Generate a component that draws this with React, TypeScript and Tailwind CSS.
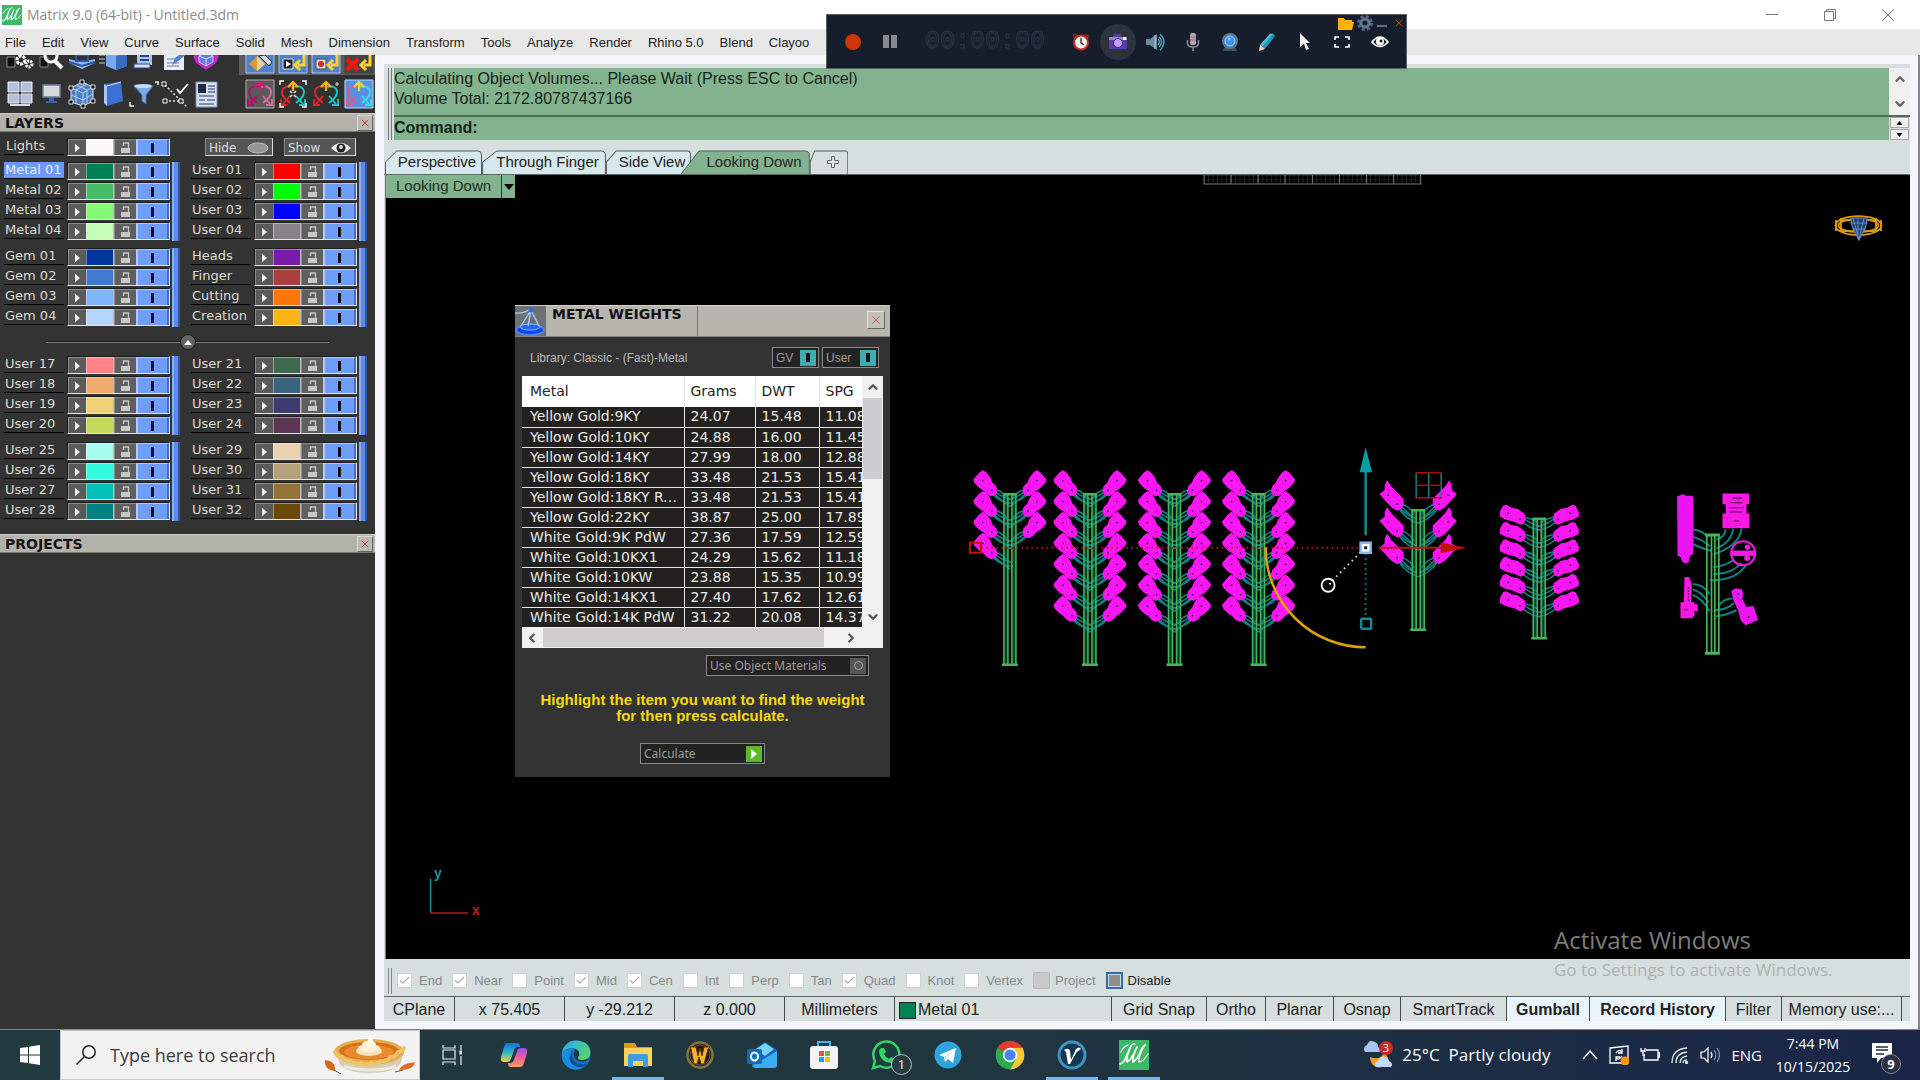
import React, { useState } from 'react';
import { Check, ChevronDown, ChevronLeft, ChevronRight, ChevronUp, X } from 'lucide-react';

type Layer = { name: string; color: string };

const menuItems = [
  'File', 'Edit', 'View', 'Curve', 'Surface', 'Solid', 'Mesh', 'Dimension', 'Transform', 'Tools',
  'Analyze', 'Render', 'Rhino 5.0', 'Blend', 'Clayoo', 'Help',
];

const layerGroups: [Layer[], Layer[]][] = [
  [
    [
      { name: 'Metal 01', color: '#008255' },
      { name: 'Metal 02', color: '#45bd68' },
      { name: 'Metal 03', color: '#84fb76' },
      { name: 'Metal 04', color: '#c4ffb9' },
    ],
    [
      { name: 'User 01', color: '#fe0000' },
      { name: 'User 02', color: '#00fb08' },
      { name: 'User 03', color: '#0000fb' },
      { name: 'User 04', color: '#858385' },
    ],
  ],
  [
    [
      { name: 'Gem 01', color: '#00379c' },
      { name: 'Gem 02', color: '#4079cf' },
      { name: 'Gem 03', color: '#80b4f8' },
      { name: 'Gem 04', color: '#b5d5ff' },
    ],
    [
      { name: 'Heads', color: '#7a1aa8' },
      { name: 'Finger', color: '#ab3f40' },
      { name: 'Cutting', color: '#ff7606' },
      { name: 'Creation', color: '#ffb416' },
    ],
  ],
  [
    [
      { name: 'User 17', color: '#ff8386' },
      { name: 'User 18', color: '#f0ab6c' },
      { name: 'User 19', color: '#f1d077' },
      { name: 'User 20', color: '#c2da5a' },
    ],
    [
      { name: 'User 21', color: '#3f6950' },
      { name: 'User 22', color: '#38637d' },
      { name: 'User 23', color: '#3e3b70' },
      { name: 'User 24', color: '#5d3553' },
    ],
  ],
  [
    [
      { name: 'User 25', color: '#a4fff0' },
      { name: 'User 26', color: '#32fbe0' },
      { name: 'User 27', color: '#00c0b8' },
      { name: 'User 28', color: '#018084' },
    ],
    [
      { name: 'User 29', color: '#ead2b3' },
      { name: 'User 30', color: '#b5a07a' },
      { name: 'User 31', color: '#937338' },
      { name: 'User 32', color: '#6b4a09' },
    ],
  ],
];

const metals = [
  ['Yellow Gold:9KY', '24.07', '15.48', '11.08'],
  ['Yellow Gold:10KY', '24.88', '16.00', '11.45'],
  ['Yellow Gold:14KY', '27.99', '18.00', '12.88'],
  ['Yellow Gold:18KY', '33.48', '21.53', '15.41'],
  ['Yellow Gold:18KY Royal', '33.48', '21.53', '15.41'],
  ['Yellow Gold:22KY', '38.87', '25.00', '17.89'],
  ['White Gold:9K PdW', '27.36', '17.59', '12.59'],
  ['White Gold:10KX1', '24.29', '15.62', '11.18'],
  ['White Gold:10KW', '23.88', '15.35', '10.99'],
  ['White Gold:14KX1', '27.40', '17.62', '12.61'],
  ['White Gold:14K PdW', '31.22', '20.08', '14.37'],
];

const snaps = [
  { label: 'End', on: true },
  { label: 'Near', on: true },
  { label: 'Point', on: false },
  { label: 'Mid', on: true },
  { label: 'Cen', on: true },
  { label: 'Int', on: false },
  { label: 'Perp', on: false },
  { label: 'Tan', on: false },
  { label: 'Quad', on: true },
  { label: 'Knot', on: false },
  { label: 'Vertex', on: false },
];

const MatrixLogo = ({ className }: { className: string }) => (
  <svg viewBox="0 0 30 30" className={className}>
    <rect width="30" height="30" fill="#3fb768" />
    <path
      d="M1 24q4-1 6-7L12 6q-5 10-4 16 6-4 10-15-5 10-4 15 5-3 9-14l3-3"
      fill="none" stroke="#fff" strokeWidth="1.7" strokeLinecap="round" strokeLinejoin="round"
    />
    <path d="M26 5q-7 11-6 17 4 0 9-8M2 12q2-5 7-7M12 6q2-3 4-2" fill="none" stroke="#fff" strokeWidth="1.3" strokeLinecap="round" />
  </svg>
);

/* ---------- left tool palette ---------- */

const Ico = ({ children }: { children: React.ReactNode }) => (
  <svg viewBox="0 0 30 30" className="w-[30px] h-[30px] shrink-0">
    {children}
  </svg>
);

const Gumball = ({ a, b, c }: { a: string; b: string; c: string }) => (
  <g fill="none" strokeWidth="1.8">
    <path d="M14 8C8 6 4 9 4 13c0 5 4 8 8 11M12 17l-7 8M3 20v6h6" stroke={a} />
    <path d="M16 8c6-2 10 1 10 5 0 5-4 8-8 11M18 17l7 8M27 20v6h-6" stroke={c} />
    <path d="M15 12V4M10 8l5-5 5 5" stroke={b} strokeWidth="2.2" />
  </g>
);

const topTools = [
  <Ico key="gears">
    <path d="M2 16h8v10H2z" fill="#111" stroke="#888" />
    <circle cx="16" cy="19" r="4" fill="none" stroke="#fff" strokeWidth="3" strokeDasharray="3 1" />
    <circle cx="24" cy="23" r="3" fill="none" stroke="#fff" strokeWidth="3" strokeDasharray="2 1" />
  </Ico>,
  <Ico key="find">
    <path d="M4 16h8v10H4z" fill="#111" stroke="#888" />
    <circle cx="15" cy="15" r="6" fill="none" stroke="#fff" strokeWidth="3" />
    <path d="M19 20l7 7" stroke="#fff" strokeWidth="4" />
  </Ico>,
  <Ico key="plane">
    <path d="M2 18l13 3 13-3v4l-13 6-13-6z" fill="#8fb4ea" />
    <path d="M2 21l13 4 13-4M9 14h12v6H9z" fill="none" stroke="#2b559f" strokeWidth="2" />
  </Ico>,
  <Ico key="cube">
    <path d="M1 14h6M1 18h6M1 22h6" stroke="#c9c9c9" />
    <path d="M8 12l10-3 11 3v13l-11 4-10-4z" fill="#78a8ee" />
    <path d="M18 15v14l11-4V12z" fill="#396bc0" />
  </Ico>,
  <Ico key="scroll">
    <path d="M8 10h15v14H8z" fill="#a9c3ef" />
    <path d="M11 15h9M11 19h9" stroke="#28488c" strokeWidth="2" />
    <path d="M5 23h16v4H5z" fill="#d7e2f7" stroke="#28488c" />
  </Ico>,
  <Ico key="note">
    <path d="M4 8h20v21H4z" fill="#e8ecf5" />
    <path d="M7 18h10M7 22h12M7 25h12" stroke="#6c7ca5" />
    <path d="M12 24l3-7 12-9 2 3-12 10z" fill="#4b83d5" />
  </Ico>,
  <Ico key="gem">
    <path d="M2 15l13-8 13 8-3 7-10 7-10-7z" fill="#b82ad0" />
    <path d="M8 15l7-4 7 4v6l-7 4-7-4z" fill="#5c7fe0" stroke="#efb1f5" />
    <path d="M15 17v8M8 15l7 3 7-3" fill="none" stroke="#dcd3fa" />
  </Ico>,
];

const arrowTool = (key: string, mark: React.ReactNode) => (
  <Ico key={key}>
    <path d="M1 8h28v20H1z" fill={key === 'cancel' ? '#444' : '#4f80cc'} stroke={key === 'cancel' ? '#444' : '#a9c4ee'} />
    {mark}
    <path d="M26 10v10h-6M22 15l-5 5 5 5" fill="none" stroke="#ffd32d" strokeWidth="3" />
  </Ico>
);

const modeTools = [
  <Ico key="pick">
    <path d="M1 8h28v20H1z" fill="#4f80cc" stroke="#a9c4ee" />
    <path d="M4 19l8-8 8 8-8 7z" fill="#d99a35" />
    <path d="M12 11l8 8-8 7z" fill="#f6d38a" />
    <path d="M14 11l10 10 3-4-7-7z" fill="#d6d6d6" stroke="#333" />
  </Ico>,
  arrowTool('play', (
    <>
      <path d="M5 14h10v10H5z" fill="#222" stroke="#ddd" />
      <path d="M8 16v6l5-3z" fill="#fff" />
    </>
  )),
  arrowTool('record', (
    <>
      <path d="M5 14h10v10H5z" fill="#ddd" stroke="#444" />
      <circle cx="10" cy="19" r="3" fill="#d8261b" />
    </>
  )),
  arrowTool('cancel', <path d="M3 14l11 11M14 14L3 25" stroke="#f3160a" strokeWidth="4" />),
];

const lowerTools = [
  <Ico key="views">
    <path d="M3 3h11v10H3zM16 3h11v10H16zM3 15h11v9l-11 0zM16 15h11v9H16z" fill="#b5c0da" stroke="#edf1fb" />
    <path d="M5 26h20" stroke="#d5dbea" strokeWidth="2" />
  </Ico>,
  <Ico key="monitor">
    <path d="M7 6h17v12H7z" fill="#d9d9dc" stroke="#6f7f9f" strokeWidth="1.5" />
    <path d="M13 19h5v3h-5zM10 22h11v2H10z" fill="#3d62ab" />
  </Ico>,
  <Ico key="mesh">
    <path d="M4 9l11-6 11 5v14l-10 5-12-4z" fill="#4f7fc4" stroke="#dde6f5" />
    <path d="M4 9l12 5 10-6M16 14v13M9 6l11 5v14M20 5L9 11v14M4 16l12 5 10-6" fill="none" stroke="#b2cef5" />
    <path d="M2 7h4v4H2zM13 1h4v4h-4zM24 6h4v4h-4zM14 25h4v4h-4zM2 21h4v4H2zM24 20h4v4h-4z" fill="#111" stroke="#ddd" />
  </Ico>,
  <Ico key="book">
    <path d="M6 5l17-2 2 19-16 5-3-3z" fill="#3d6fd4" />
    <path d="M6 5l3 2v20l-3-3z" fill="#a9c5f8" />
    <path d="M9 7l14-4" stroke="#d6e3fb" />
  </Ico>,
  <Ico key="filter">
    <path d="M5 7h19l-7 9v9l-4-3v-6z" fill="#79aae8" stroke="#4275ba" />
    <ellipse cx="14" cy="7" rx="9" ry="2" fill="#c3dbf8" />
    <path d="M26 3h3v3M1 23v4h4" fill="none" stroke="#eee" strokeWidth="1.5" />
  </Ico>,
  <Ico key="points">
    <path d="M5 6l10 10 12 12M5 22h20" stroke="#eee" strokeDasharray="2 2" strokeWidth="1.5" />
    <path d="M2 3h4v4H2zM3 20h4v4H3zM19 20h4v4h-4z" fill="#222" stroke="#fff" />
    <path d="M17 10l3 4 8-9" fill="none" stroke="#fff" strokeWidth="1.8" />
  </Ico>,
  <Ico key="sheet">
    <path d="M5 3h21v25H5z" fill="#d7def0" stroke="#8090b3" />
    <path d="M7 5h8v9H7z" fill="#1e2941" />
    <path d="M17 7h7M17 10h7M17 13h7M8 17h15M8 21h6M16 21h8M8 25h15" stroke="#637298" strokeWidth="1.5" />
  </Ico>,
];

const gumballTools = [
  <Ico key="g1">
    <path d="M1 1h28v28H1z" fill="#5a5a5a" stroke="#aaa" />
    <Gumball a="#b30f63" b="#d01d78" c="#e26ba6" />
  </Ico>,
  <Ico key="g2">
    <Gumball a="#e3262b" b="#ffb515" c="#20c5c4" />
    <path d="M2 6V2h4M24 2h4v4M28 24v4h-4M6 28H2v-4M12 12l2 2M18 12l-2 2M12 18l2-2M18 18l-2-2" fill="none" stroke="#fff" strokeWidth="1.4" />
  </Ico>,
  <Ico key="g3">
    <Gumball a="#e3262b" b="#ffb515" c="#20c5c4" />
    <path d="M26 3v4M24 5h4" stroke="#ddd" />
  </Ico>,
  <Ico key="g4">
    <path d="M1 1h28v28H1z" fill="#5791e6" stroke="#c5d8f5" />
    <Gumball a="#e05a7e" b="#ffd23c" c="#3edbe9" />
  </Ico>,
];

const ToolPalette = () => (
  <div className="bg-[#323132]">
    <div className="flex h-5 overflow-hidden">
      <div className="flex items-end w-[240px] pl-1 pb-1">
        {topTools.map((icon, i) => (
          <button key={i} className="w-[31px] flex justify-center shrink-0">{icon}</button>
        ))}
      </div>
      <div className="flex flex-1 items-end bg-[#5b5b5c] pl-1">
        {modeTools.map((icon, i) => (
          <button key={i} className="w-[33px] flex justify-center shrink-0">{icon}</button>
        ))}
      </div>
    </div>
    <div className="flex py-1">
      <div className="flex w-[240px] pl-1">
        {lowerTools.map((icon, i) => (
          <button key={i} className="w-[31px] flex justify-center shrink-0">{icon}</button>
        ))}
      </div>
      <div className="flex pl-1">
        {gumballTools.map((icon, i) => (
          <button key={i} className="w-[33px] flex justify-center shrink-0">{icon}</button>
        ))}
      </div>
    </div>
  </div>
);

/* ---------- layers ---------- */

const PanelHeader = ({ title }: { title: string }) => (
  <div className="flex items-center justify-between h-[19px] pl-[5px] pr-[2px] bg-[#b3b2aa] border-t border-[#d0cfc8] border-b border-b-[#77766f]">
    <h2 className="font-bold text-[14px] leading-4 text-[#111]">{title}</h2>
    <button aria-label="Close" className="w-4 h-4 flex items-center justify-center bg-[#bcbbb3] border border-[#dbdad4] border-r-[#66655f] border-b-[#66655f]">
      <X className="w-3 h-3 text-[#c23b3b]" />
    </button>
  </div>
);

const LayerControls = ({ color }: { color: string }) => (
  <div className="flex w-[103px] h-[18px] border border-[#1c1c1c] border-b-[#e6e6e6] border-r-[#e6e6e6] bg-[#232323]">
    <button aria-label="Expand" className="w-[18px] flex items-center justify-center bg-[#5a5a5b] border-l border-t border-[#8d8d8d]">
      <svg viewBox="0 0 6 10" className="w-[5px] h-[10px]"><path d="M0 0l6 5-6 5z" fill="#f2f2f2" /></svg>
    </button>
    <button aria-label="Color" className="w-[28px] border-l border-t border-white/40 border-r border-r-[#bbb]" style={{ background: color }} />
    <button aria-label="Lock" className="w-[22px] flex items-center justify-center bg-[#5f5f60] border-l border-t border-[#8d8d8d]">
      <svg viewBox="0 0 10 12" className="w-[10px] h-3">
        <path d="M0 6h9v5H0z" fill="#c8c8c8" />
        <path d="M2.500 4V1h5v5" fill="none" stroke="#c8c8c8" strokeWidth="1.300" />
      </svg>
    </button>
    <button aria-label="Visible" className="flex-1 flex items-center justify-center bg-[#6f9dfa] border-l-2 border-t border-[#b2c9ff] border-r-2 border-r-[#4670c4]">
      <span className="w-[3px] h-[10px] bg-[#0b0f1c]" />
    </button>
  </div>
);

const LayerColumn = ({ layers, active, onPick }: { layers: Layer[]; active: string; onPick: (n: string) => void }) => (
  <div className="flex gap-[2px]">
    <div>
      {layers.map((layer) => (
        <div key={layer.name} className="flex gap-[3px] h-5">
          <button
            onClick={() => onPick(layer.name)}
            className={`w-[60px] h-[17px] pl-[1px] text-left text-[13px] leading-4 whitespace-nowrap border-b border-black ${
              active === layer.name ? 'bg-[#6d98f7] text-[#e6edff]' : 'text-[#dcdcd0]'
            }`}
          >
            {layer.name}
          </button>
          <LayerControls color={layer.color} />
        </div>
      ))}
    </div>
    <div className="w-2 h-[79px] bg-[#5c8bea] border-l-2 border-[#8bb0ff] border-r-2 border-r-[#2f57a5]" />
  </div>
);

const LayerBlock = ({ group, active, onPick }: { group: [Layer[], Layer[]]; active: string; onPick: (n: string) => void }) => (
  <div className="flex gap-[11px]">
    <LayerColumn layers={group[0]} active={active} onPick={onPick} />
    <LayerColumn layers={group[1]} active={active} onPick={onPick} />
  </div>
);

const pillButton = 'flex items-center justify-between h-[18px] pt-[1px] px-[3px] text-[12px] text-[#ddd] bg-[#555556] border border-[#888] border-r-[#ddd] border-b-[#ddd]';

const SidePanel = () => {
  const [active, setActive] = useState('Metal 01');

  return (
    <aside className="w-[375px] shrink-0 flex flex-col bg-[#343334] font-['DejaVu_Sans',sans-serif] overflow-hidden">
      <ToolPalette />
      <PanelHeader title="LAYERS" />
      <div className="pl-1 pt-[6px] pb-3 flex flex-col gap-[6px]">
        <div className="flex gap-[3px]">
          <span className="w-[60px] h-[17px] pl-[2px] text-[13px] leading-4 text-[#dcdcd0] border-b border-black">Lights</span>
          <LayerControls color="#fbfaf8" />
          <button className={`${pillButton} w-[68px] ml-8`}>
            Hide
            <svg viewBox="0 0 22 12" className="w-[22px] h-3"><ellipse cx="11" cy="6" rx="10" ry="5" fill="#969696" stroke="#bcbcbc" /></svg>
          </button>
          <button className={`${pillButton} w-[72px] ml-2`}>
            Show
            <svg viewBox="0 0 22 12" className="w-[22px] h-3">
              <path d="M1 6q10-10 20 0-10 10-20 0z" fill="#eee" />
              <circle cx="11" cy="6" r="4.500" fill="#222" />
              <circle cx="11" cy="5" r="2" fill="#ddd" />
            </svg>
          </button>
        </div>
        <LayerBlock group={layerGroups[0]} active={active} onPick={setActive} />
        <LayerBlock group={layerGroups[1]} active={active} onPick={setActive} />
        <div className="flex items-center h-4 pl-[42px] pr-[46px]">
          <span className="flex-1 h-[2px] bg-[#1c1c1c] border-b border-[#777]" />
          <button aria-label="Collapse" className="w-4 h-4 rounded-full bg-[#626262] border border-[#161616] flex items-center justify-center">
            <svg viewBox="0 0 8 5" className="w-2 h-[5px]"><path d="M0 5l4-5 4 5z" fill="#fff" /></svg>
          </button>
          <span className="flex-1 h-[2px] bg-[#1c1c1c] border-b border-[#777]" />
        </div>
        <LayerBlock group={layerGroups[2]} active={active} onPick={setActive} />
        <LayerBlock group={layerGroups[3]} active={active} onPick={setActive} />
      </div>
      <PanelHeader title="PROJECTS" />
    </aside>
  );
};

/* ---------- command area ---------- */

const CommandArea = () => (
  <div className="flex pt-1 pl-1 gap-[2px]">
    <div className="w-[4px] border-l border-r border-[#777]" />
    <div className="flex-1 text-[16px] text-[#16231a]">
      <div className="flex border-b-2 border-[#4e6b55]">
        <div className="flex-1 bg-[#83b38e] pt-[1px] leading-5 h-[47px]">
          <p>Calculating Object Volumes... Please Wait (Press ESC to Cancel)</p>
          <p>Volume Total: 2172.80787437166</p>
        </div>
        <div className="w-[21px] bg-[#f0f0f0] flex flex-col items-center justify-between py-1 text-[#606060]">
          <ChevronUp className="w-[14px] h-[14px]" strokeWidth={4} />
          <ChevronDown className="w-[14px] h-[14px]" strokeWidth={4} />
        </div>
      </div>
      <div className="flex h-[23px]">
        <label htmlFor="command" className="bg-[#83b38e] font-bold leading-[22px]">Command:</label>
        <input id="command" className="flex-1 min-w-0 bg-[#83b38e] px-1 outline-none" />
        <div className="w-[21px] flex flex-col gap-[1px] px-[1px]">
          {['M0 4l3-4 3 4z', 'M0 0l3 4 3-4z'].map((d) => (
            <button key={d} aria-label="History" className="flex-1 flex items-center justify-center bg-[#efefef] border border-[#aaa]">
              <svg viewBox="0 0 6 4" className="w-[7px] h-1"><path d={d} /></svg>
            </button>
          ))}
        </div>
      </div>
    </div>
  </div>
);

const ViewTabs = () => (
  <div className="flex items-end h-[35px] pl-[1px] text-[15px] text-[#222] border-b border-[#5d6664]">
    {[
      { name: 'Perspective', w: 'w-[97px]' },
      { name: 'Through Finger', w: 'w-[124px]' },
      { name: 'Side View', w: 'w-[85px]' },
      { name: 'Looking Down', w: 'w-[119px]' },
      { name: '+', w: 'w-[38px]' },
    ].map((tab) => {
      const on = tab.name === 'Looking Down';
      const plus = tab.name === '+';
      return (
        <button key={tab.name} aria-label={tab.name} className={`${tab.w} relative h-6 pl-[7px] text-center whitespace-nowrap ${on ? 'z-10' : ''}`}>
          <svg viewBox="0 0 100 24" preserveAspectRatio="none" className={`absolute top-0 bottom-0 right-0 h-full ${on ? 'left-[-10px] w-[129px]' : 'left-0 w-full'}`}>
            <path
              d={on ? 'M0 24L14 1H96Q99.500 1 99.500 5V24' : 'M.5 24V12L12 1H96Q99.500 1 99.500 5V24'}
              fill={on ? '#83b38e' : plus ? '#d6dfde' : '#d6e8eb'}
              stroke="#555d5c"
              vectorEffect="non-scaling-stroke"
            />
          </svg>
          {plus ? (
            <svg viewBox="0 0 12 12" className="relative w-3 h-3 mx-auto">
              <path d="M4.500.5h3v4h4v3h-4v4h-3v-4h-4v-3h4z" fill="#e9eeed" stroke="#666" />
            </svg>
          ) : (
            <span className="relative block leading-[22px]">{tab.name}</span>
          )}
        </button>
      );
    })}
  </div>
);

/* ---------- viewport drawing ---------- */

type TreeProps = {
  cx: number; top: number; bottom: number; start: number; pitch: number; left: number; right: number;
  leaf: string; twigs: string; dots: [number, number][];
};

const Tree = ({ cx, top, bottom, start, pitch, left, right, leaf, twigs, dots }: TreeProps) => {
  const side = (count: number, flip: number) =>
    Array.from({ length: count }, (_, i) => (
      <g key={`${flip}-${i}`} transform={`translate(${cx} ${start + i * pitch}) scale(${flip} 1)`}>
        <path d={twigs} fill="none" stroke="#0d8080" strokeWidth="1.6" />
        <path d={leaf} fill="#fb17f4" stroke="#fb17f4" strokeLinejoin="round" />
        {dots.map(([x, y]) => <circle key={x} cx={x} cy={y} r="0.9" fill="#3b0c4c" />)}
      </g>
    ));
  return (
    <g>
      <path d={`M${cx - 4} ${top}V${bottom}M${cx + 4} ${top}V${bottom}`} stroke="#0c4526" strokeWidth="3" />
      {side(left, 1)}
      {side(right, -1)}
      <path
        d={`M${cx - 6} ${top}V${bottom}M${cx - 2} ${top}V${bottom}M${cx + 2} ${top}V${bottom}M${cx + 6} ${top}V${bottom}`}
        stroke="#46b45c" strokeWidth="1.6"
      />
      <path d={`M${cx - 7} ${top}H${cx + 7}M${cx - 8} ${bottom}H${cx + 8}`} stroke="#46b45c" strokeWidth="2.400" />
    </g>
  );
};

const wide = {
  top: 494, bottom: 664.5, start: 470.5, pitch: 20.9,
  leaf: 'M-36 9L-35 12L-30 17L-26 19.500L-23 23L-19 25L-15 24L-13 21L-14 16L-18 12L-20 7L-24 2L-27 0L-30 2Z',
  twigs: 'M-14 19Q-9 20-3 26M-15 21Q-9 26 2 29M-17 24Q-9 32 3 33M-16 23Q-9 29 0 36',
  dots: [[-27, 10], [-18, 19.5]] as [number, number][],
};
const spiky = {
  top: 510, bottom: 629.5, start: 481, pitch: 26.7,
  leaf: 'M-38 13L-33 9L-33 4L-31 0L-27 6L-21 12L-15 18L-15 23L-17 27L-21 29L-26 26L-30 22Z',
  twigs: 'M-16 23Q-9 25-4 33M-17 25Q-9 33-4 37M-19 28Q-12 38 0 42M-18 27Q-11 35-1 38',
  dots: [[-30, 14], [-21, 23]] as [number, number][],
};
const flat = {
  top: 518.5, bottom: 638, start: 505, pitch: 17.3,
  leaf: 'M-39 11L-39 7L-36 1L-33 0L-28 3L-22 4L-15 9L-14 14L-16 18L-19 19L-25 16L-33 14Z',
  twigs: 'M-14 12Q-8 13-2 17M-14 14Q-9 19 2 21M-16 17Q-9 24 2 25',
  dots: [[-31, 8], [-19, 14]] as [number, number][],
};

const Scene = () => (
  <svg viewBox="387 175 1523 784" preserveAspectRatio="xMinYMin slice" className="absolute inset-0 w-full h-full">
    <defs>
      <pattern id="mesh" x="1204" y="175" width="4.500" height="4.500" patternUnits="userSpaceOnUse">
        <path d="M0 0H4.500M0 0V4.500" stroke="#3c3c3c" />
      </pattern>
    </defs>
    <path d="M1204 175H1421V183H1204Z" fill="url(#mesh)" />
    <path d="M1204.500 175V184M1231.500 175V184M1258.500 175V184M1285.500 175V184M1313 175V184M1340 175V184M1367 175V184M1394 175V184M1421 175V184M1204 184H1422" stroke="#777" />

    <g fill="none" stroke="#dc9b17" strokeWidth="1.8">
      <ellipse cx="1858.500" cy="225.500" rx="23" ry="9.500" />
      <ellipse cx="1858.500" cy="225.500" rx="20" ry="6.500" />
      <path d="M1836 220v11M1841 218v14M1876 218v14M1881 220v11M1841 220h35M1841 231h35" />
    </g>
    <path d="M1851 218h16l-1 8-7 14-7-14z" fill="#263d68" stroke="#6288cf" />
    <path d="M1850 223h18M1853 218l6 21 5-21M1858 217v22M1852 229h14" stroke="#6288cf" fill="none" />

    <Tree cx={1010.5} left={4} right={3} {...wide} />
    <Tree cx={1090.5} left={7} right={7} {...wide} />
    <Tree cx={1175} left={7} right={7} {...wide} />
    <Tree cx={1259} left={7} right={7} {...wide} />
    <Tree cx={1418.5} left={3} right={3} {...spiky} />
    <Tree cx={1539.5} left={6} right={6} {...flat} />

    {/* sprue with mixed parts */}
    <g transform="translate(1360 440) scale(0.3333)">
      <g fill="none" stroke="#0d8080" strokeWidth="6">
        <path d="M1000 268q25 2 45 22M1000 290q30 10 50 28M1000 312q25 12 55 20M1098 268q-5 25-28 30M1120 265q-5 40-50 60M1145 265q-5 50-85 78M1120 360q-30 20-60 20M1145 368q-30 35-85 33M1160 372q-30 50-110 48M998 432q30-2 52 30M998 448q25 5 48 38M998 464q30 10 50 48M1118 475q-30 0-42 25M1122 488q-20 20-56 22M1130 510q-30 15-62 18" />
      </g>
      <path d="M1041 285V638M1055 285V638M1065 285V638M1077 285V638" stroke="#46b45c" strokeWidth="5" />
      <path d="M1036 284H1080M1035 639H1080" stroke="#46b45c" strokeWidth="9" />
      <path d="M952 167h8l4-4h10l4 4h20l3 8v140l-2 28-8 3-4 20-10 4-10-6-4-12-10-6z" fill="#ec14f2" />
      <path d="M1088 160h80v32h-8v28h8v44h-80v-44h10v-28h-10z" fill="#fb17e4" />
      <path d="M1118 174h28M1112 187h36M1108 202h44M1108 215h40M1122 243h16" stroke="#5f1168" strokeWidth="4" />
      <circle cx="1150" cy="339" r="36" fill="none" stroke="#fb17e4" strokeWidth="6" />
      <path d="M1114 339h72" stroke="#fb17e4" strokeWidth="16" />
      <circle cx="1163" cy="321" r="8" fill="#fb17e4" />
      <circle cx="1162" cy="353" r="9" fill="#fb17e4" />
      <path d="M974 410h14l8 22-2 54h10v6h10v20h-10v14l-8 8h-34v-48h10z" fill="#fb17e4" />
      <path d="M986 440v46M972 508h14" stroke="#5f1168" strokeWidth="4" strokeDasharray="6 3" />
      <path d="M1114 452l14-8 18 4 4 12-3 14 12 26 22-3 14 42-38 16-14-14-8-30-14-30z" fill="#f016f2" />
      <circle cx="1166" cy="531" r="3" fill="#3b0c4c" />
      <circle cx="1135" cy="461" r="3" fill="#3b0c4c" />
    </g>

    {/* gumball */}
    <path d="M982 547.500H1360" stroke="#c01818" strokeWidth="2" strokeDasharray="1.500 3.500" />
    <rect x="970.500" y="542.500" width="11" height="10" fill="none" stroke="#c01010" strokeWidth="2" />
    <path d="M1266 547A100 100 0 0 0 1366 647" fill="none" stroke="#e0a012" strokeWidth="2.500" />
    <path d="M1366 535V465" stroke="#0f8b91" strokeWidth="2.500" />
    <path d="M1360 472L1366 447L1372.500 472Z" fill="#05a0a6" />
    <path d="M1366 553V618" stroke="#0f8b91" strokeWidth="2" strokeDasharray="1.500 3.500" />
    <rect x="1361.500" y="618.500" width="10" height="10" rx="1" fill="none" stroke="#0f8b91" strokeWidth="2.400" />
    <path d="M1361 552L1333 580" stroke="#ddd" strokeWidth="2" strokeDasharray="1.500 4" />
    <circle cx="1328.500" cy="585" r="6.500" fill="none" stroke="#fff" strokeWidth="1.800" />
    <circle cx="1330.500" cy="583.500" r="1" fill="#fff" />
    <rect x="1361" y="542.500" width="10" height="10" fill="#fff" stroke="#8db8ee" strokeWidth="2.500" />
    <rect x="1364.500" y="546" width="3" height="3" fill="#222" />
    <path d="M1379 547.500H1442" stroke="#c11616" strokeWidth="2.200" />
    <path d="M1441 542L1467 547.500L1441 553Z" fill="#c30f0c" />
    <path d="M1416.500 473V498M1429 473V498M1441.500 473V498" stroke="#187f83" strokeWidth="1.500" />
    <path d="M1416 472.500H1442M1416 485H1442M1416 497.500H1442" stroke="#a8100e" strokeWidth="1.500" />

    {/* world axes */}
    <path d="M431.500 912V878" stroke="#0f8b91" strokeWidth="1.500" />
    <path d="M431 912.500H469" stroke="#b01818" strokeWidth="1.500" />
    <text x="435" y="878" fill="#0f9aa0" fontSize="14" fontWeight="bold">y</text>
    <text x="473" y="915" fill="#d11818" fontSize="14" fontWeight="bold">x</text>
  </svg>
);

/* ---------- metal weights dialog ---------- */

const toggleBox = 'flex items-center justify-between h-[21px] p-[2px] pl-[3px] border border-[#888] bg-[#232222] text-[12px] text-[#9c9c9c]';

const MetalWeights = () => (
  <section className="absolute left-[129px] top-[130px] w-[375px] pb-[13px] bg-[#343334] font-['DejaVu_Sans',sans-serif]">
    <header className="flex h-8 bg-[#b7b6ae] border-t border-[#d0cfc8] border-b border-b-[#85847d]">
      <svg viewBox="0 0 31 30" className="w-[31px] h-[30px] bg-[#6f7072]">
        <ellipse cx="15" cy="24" rx="14" ry="5" fill="#1248e8" stroke="#4f8dff" strokeWidth="1.500" />
        <ellipse cx="15" cy="21" rx="10" ry="3" fill="#2466ff" stroke="#87b6ff" />
        <path d="M0 7q8 1 16-4M16 4L6 20M16 4l8 16M16 4l-3 16" fill="none" stroke="#a5c9ff" strokeWidth="1.400" />
        <circle cx="16" cy="4" r="2.500" fill="#2e6df0" />
      </svg>
      <h2 className="w-[152px] pl-[6px] font-bold text-[14px] leading-4 text-[#111] border-r border-[#77766f]">METAL WEIGHTS</h2>
      <button aria-label="Close dialog" className="ml-auto mr-[5px] mt-[5px] w-[18px] h-[18px] flex items-center justify-center bg-[#c3c2ba] border border-[#e2e1da] border-r-[#66655f] border-b-[#66655f]">
        <X className="w-[14px] h-[14px] text-[#c84a4a]" strokeWidth={1.5} />
      </button>
    </header>
    <div className="flex items-center gap-[3px] pt-[10px] pl-[15px] pr-[11px] pb-2 font-['Liberation_Sans',sans-serif]">
      <p className="flex-1 text-[12px] text-[#b9b9b9]">Library: Classic - (Fast)-Metal</p>
      {[['GV', 'w-[47px]'], ['User', 'w-[57px]']].map(([label, w]) => (
        <button key={label} className={`${toggleBox} ${w}`}>
          {label}
          <span className="w-4 h-4 flex items-center justify-center bg-[#40acaf]">
            <span className="w-1 h-[9px] bg-[#101010]" />
          </span>
        </button>
      ))}
    </div>
    <div className="mx-[7px] bg-[#f0f0f0]">
      <div className="flex">
        <div className="flex-1 overflow-hidden h-[251px]">
          <table className="table-fixed w-[363px] border-collapse text-[14px] text-left">
            <thead className="bg-white text-[#222]">
              <tr className="h-[31px]">
                <th className="w-[162px] pl-2 font-normal border-r border-[#e5e5e5]">Metal</th>
                <th className="w-[71px] pl-[6px] font-normal border-r border-[#e5e5e5]">Grams</th>
                <th className="w-[64px] pl-[6px] font-normal border-r border-[#e5e5e5]">DWT</th>
                <th className="pl-[6px] font-normal">SPG</th>
              </tr>
            </thead>
            <tbody className="bg-[#22211f] text-[#e8e8e4]">
              {metals.map((row) => (
                <tr key={row[0]} className="h-5 border-b border-[#e6e6e6]">
                  {row.map((cell, i) => (
                    <td key={i} className={`p-0 leading-[19px] truncate border-r border-[#e6e6e6] ${i === 0 ? 'pl-2 pr-1' : 'pl-[6px]'}`}>{cell}</td>
                  ))}
                </tr>
              ))}
            </tbody>
          </table>
        </div>
        <div className="w-[21px] flex flex-col items-center text-[#555]">
          <ChevronUp className="w-[14px] h-[14px] my-1" strokeWidth={4} />
          <div className="w-[19px] h-[81px] bg-[#cdcdcf]" />
          <ChevronDown className="w-[14px] h-[14px] mt-auto mb-[3px]" strokeWidth={4} />
        </div>
      </div>
      <div className="flex items-center h-[21px] pl-[3px] text-[#555]">
        <ChevronLeft className="w-[14px] h-[14px] mr-1" strokeWidth={4} />
        <div className="flex-1 h-[19px] bg-[#cfcecd]" />
        <ChevronRight className="w-[14px] h-[14px] ml-5 mr-[25px]" strokeWidth={4} />
      </div>
    </div>
    <div className="flex flex-col items-center pt-[7px] font-['Noto_Sans',sans-serif]">
      <button className={`${toggleBox} w-[163px] self-end mr-[21px]`}>
        Use Object Materials
        <span className="w-4 h-4 flex items-center justify-center bg-[#565656]">
          <span className="w-[9px] h-[9px] rounded-full border border-[#aaa]" />
        </span>
      </button>
      <p className="mt-4 px-4 text-center text-[15px] leading-4 font-bold text-[#f5d90f] font-['Liberation_Sans',sans-serif]">
        Highlight the item you want to find the weight<br />for then press calculate.
      </p>
      <button className={`${toggleBox} w-[125px] mt-[19px]`}>
        Calculate
        <span className="w-4 h-4 flex items-center justify-center bg-[#5cb92b]">
          <svg viewBox="0 0 6 10" className="w-[6px] h-[10px]"><path d="M0 0l6 5-6 5z" fill="#fff" /></svg>
        </span>
      </button>
    </div>
  </section>
);

/* ---------- snap + status bars ---------- */

const SnapBar = () => (
  <div className="flex items-center gap-[10px] h-[38px] pl-1 pt-[6px] text-[13px] text-[#85898a] border-b border-[#5d6664]">
    <div className="w-[4px] h-[26px] mr-[-5px] border-l border-r border-[#888]" />
    {snaps.map((snap) => (
      <label key={snap.label} className="flex items-center gap-[7px]">
        <span className="relative w-[15px] h-[15px] flex">
          <input type="checkbox" defaultChecked={snap.on} className="peer appearance-none w-[15px] h-[15px] bg-white border border-[#d0d0d0]" />
          <Check className="absolute inset-0 w-[15px] h-[15px] p-[1px] text-[#aaa] hidden peer-checked:block pointer-events-none" />
        </span>
        {snap.label}
      </label>
    ))}
    <label className="flex items-center gap-[5px]">
      <input type="checkbox" className="appearance-none w-[17px] h-[17px] rounded-[2px] bg-[#c9c9c9] border border-[#bbb]" />
      Project
    </label>
    <label className="flex items-center gap-[5px] text-[#222]">
      <input type="checkbox" className="appearance-none w-[17px] h-[17px] bg-[#8d8d8d] border-2 border-[#2f6da5] outline outline-1 -outline-offset-3 outline-[#c6dced]" />
      Disable
    </label>
  </div>
);

const cell = 'shrink-0 pt-[2px] border-r border-[#444b4a] flex items-center justify-center whitespace-nowrap';

const StatusBar = () => (
  <div className="flex h-6 text-[16px] text-[#222]">
    <button className={`${cell} w-[71px]`}>CPlane</button>
    <span className={`${cell} w-[110px]`}>x 75.405</span>
    <span className={`${cell} w-[110px]`}>y -29.212</span>
    <span className={`${cell} w-[110px]`}>z 0.000</span>
    <button className={`${cell} w-[110px]`}>Millimeters</button>
    <button className="flex-1 min-w-0 flex items-center gap-[2px] pl-1 pt-[2px] border-r border-[#444b4a]">
      <span className="w-[17px] h-[17px] bg-[#008255] border border-[#222]" />
      Metal 01
    </button>
    <button className={`${cell} w-[95px]`}>Grid Snap</button>
    <button className={`${cell} w-[59px]`}>Ortho</button>
    <button className={`${cell} w-[68px]`}>Planar</button>
    <button className={`${cell} w-[67px]`}>Osnap</button>
    <button className={`${cell} w-[106px]`}>SmartTrack</button>
    <button className={`${cell} w-[83px] font-bold bg-[#e9f4fa]`}>Gumball</button>
    <button className={`${cell} w-[136px] font-bold bg-[#e9f4fa]`}>Record History</button>
    <button className={`${cell} w-[56px]`}>Filter</button>
    <button className={`${cell} w-[120px]`}>Memory use:...</button>
    <span className="w-2" />
  </div>
);

/* ---------- screen recorder ---------- */

const Recorder = () => (
  <div className="absolute left-[826px] top-[14px] w-[581px] h-[55px] flex items-center bg-[#161d2b] border border-[#5a5f66] z-20">
    <button aria-label="Record" className="ml-[18px] w-4 h-4 rounded-full bg-[#cf3404]" />
    <button aria-label="Pause" className="ml-[22px] w-[14px] h-[13px] border-x-[6px] border-[#858890]" />
    <span className="ml-[28px] w-[120px] text-[25px] font-['Liberation_Mono',monospace] text-[#161d2b] [-webkit-text-stroke:1px_#2d3442]">00:00:00</span>
    <div className="flex ml-[17px]">
      <button aria-label="Timer" className="w-[37px] flex justify-center items-center">
        <svg viewBox="0 0 18 18" className="w-[18px] h-[18px]">
          <circle cx="3" cy="3" r="2.500" fill="#5b2230" /><circle cx="15" cy="3" r="2.500" fill="#5b2230" />
          <circle cx="9" cy="9.500" r="7" fill="#f6f3f1" stroke="#d4281f" strokeWidth="2" />
          <path d="M9 5v5l3 2" fill="none" stroke="#222" strokeWidth="1.300" />
        </svg>
      </button>
      <button aria-label="Snapshot" className="w-9 h-9 mx-[1px] rounded-full bg-[#2c323e] flex justify-center items-center">
        <svg viewBox="0 0 18 16" className="w-[18px] h-4">
          <path d="M5 0h7l1 3h5v12H0V3h4z" fill="#5b39b0" /><path d="M0 3h18v3H0z" fill="#8f92a3" />
          <circle cx="9" cy="9" r="4.500" fill="#c39bff" stroke="#40257f" /><path d="M14 3h3v3h-3z" fill="#fff" />
        </svg>
      </button>
      <button aria-label="Speaker" className="w-[37px] flex justify-center items-center">
        <svg viewBox="0 0 19 18" className="w-[19px] h-[18px]">
          <path d="M0 6h4l7-5v16l-7-5H0z" fill="#688c9c" /><path d="M9 2v14" stroke="#b8d3dc" />
          <path d="M12 6q3 3 0 6M13 4q5 5 0 10M14 1q8 8 0 16" fill="none" stroke="#3fa9c5" strokeWidth="1.400" />
        </svg>
      </button>
      <button aria-label="Microphone" className="w-[37px] flex justify-center items-center">
        <svg viewBox="0 0 14 18" className="w-[14px] h-[18px]">
          <rect x="4" width="6" height="12" rx="2" fill="#a7a9b3" /><path d="M4 4h6M4 7h6" stroke="#c0526d" />
          <path d="M1.500 7v3q0 4 5.500 4t5.500-4V7M7 14v4" fill="none" stroke="#8a8c96" strokeWidth="1.500" />
        </svg>
      </button>
      <button aria-label="Webcam" className="w-[37px] flex justify-center items-center">
        <svg viewBox="0 0 18 18" className="w-[18px] h-[18px]">
          <path d="M4 14h10l2 4H2z" fill="#3c5061" /><circle cx="9" cy="8" r="8" fill="#557a94" />
          <circle cx="9" cy="8" r="5" fill="#3d95ef" stroke="#9bd0ff" /><circle cx="8" cy="6" r="1.500" fill="#8ec8ff" />
        </svg>
      </button>
      <button aria-label="Draw" className="w-[38px] flex justify-center items-center">
        <svg viewBox="0 0 18 18" className="w-[18px] h-[18px]">
          <path d="M12 1q3-2 5 2L7 16 2 12z" fill="#2393b8" /><path d="M12 1L2 12l2 2L15 1z" fill="#4dbbd8" />
          <path d="M2 12l5 4-6 2z" fill="#ffd8c5" />
        </svg>
      </button>
      <button aria-label="Cursor" className="w-[37px] flex justify-center items-center">
        <svg viewBox="0 0 12 17" className="w-3 h-[17px]"><path d="M1 0l10 10H7l3 6-3 1-2-6-4 3z" fill="#f0f0f0" /></svg>
      </button>
      <button aria-label="Region" className="w-[38px] flex justify-center items-center">
        <svg viewBox="0 0 16 12" className="w-4 h-3"><path d="M1 4V1h4M11 1h4v3M15 8v3h-4M5 11H1V8" fill="none" stroke="#fff" strokeWidth="1.600" /></svg>
      </button>
      <button aria-label="Preview" className="w-[37px] flex justify-center items-center">
        <svg viewBox="0 0 18 12" className="w-[18px] h-3">
          <path d="M1 6q8-10 16 0-8 9-16 0z" fill="#161d2b" stroke="#fff" strokeWidth="1.700" />
          <circle cx="9" cy="5.500" r="4" fill="#fff" /><circle cx="10" cy="5" r="1.500" fill="#161d2b" />
        </svg>
      </button>
    </div>
    <div className="absolute right-[1px] top-0 flex items-center gap-[3px]">
      <svg viewBox="0 0 16 13" className="w-4 h-[13px]"><path d="M0 1h6l1 2h7v2h2l-2 8H0z" fill="#ffb10a" /></svg>
      <svg viewBox="0 0 16 16" className="w-4 h-4">
        <circle cx="8" cy="8" r="6.500" fill="none" stroke="#4f677c" strokeWidth="3" strokeDasharray="3 2.100" />
        <circle cx="8" cy="8" r="4" fill="none" stroke="#5f788d" strokeWidth="3" />
      </svg>
      <span className="w-[10px] h-[2px] ml-[1px] mr-[3px] mt-[6px] bg-[#55708a]" />
      <button aria-label="Close recorder"><X className="w-3 h-3 text-[#d43a16]" /></button>
    </div>
  </div>
);

/* ---------- taskbar ---------- */

const apps: { name: string; open?: boolean; icon: React.ReactNode }[] = [
  {
    name: 'Task View',
    icon: (
      <svg viewBox="0 0 20 20" className="w-5 h-5" fill="none" stroke="#e8ecee" strokeWidth="1.200">
        <path d="M1 5h12v9H1zM1 0v3h12V0M1 20v-3h12v3M19 0v5M19 11v9" /><path d="M18 6h2v3h-2z" fill="#fff" />
      </svg>
    ),
  },
  {
    name: 'Copilot',
    icon: (
      <svg viewBox="0 0 28 26" className="w-7 h-[26px]">
        <defs>
          <linearGradient id="cpA" x2="0" y2="1"><stop stopColor="#1b6be8" /><stop offset=".5" stopColor="#2bb7c4" /><stop offset="1" stopColor="#f0d03c" /></linearGradient>
          <linearGradient id="cpB" x2="0" y2="1"><stop stopColor="#8b52f0" /><stop offset=".5" stopColor="#ef5f9c" /><stop offset="1" stopColor="#f9a04f" /></linearGradient>
        </defs>
        <path d="M8 1h9q3 0 3 4h-3q-2 0-3 3l-3 9q-1 3-4 3H4q-4 0-3-5L4 5q1-4 4-4z" fill="url(#cpA)" />
        <path d="M20 25h-9q-3 0-3-4h3q2 0 3-3l3-9q1-3 4-3h3q4 0 3 5l-3 10q-1 4-4 4z" fill="url(#cpB)" />
      </svg>
    ),
  },
  {
    name: 'Edge',
    icon: (
      <svg viewBox="0 0 30 30" className="w-[30px] h-[30px]">
        <defs>
          <linearGradient id="edA" x2="1" y2="1"><stop stopColor="#2ba8e8" /><stop offset="1" stopColor="#5ade5c" /></linearGradient>
        </defs>
        <circle cx="15" cy="15" r="14.500" fill="#1670c4" />
        <path d="M1 13Q4 0 16 .5q13 1 13.500 12Q29 20 20 20q-4 0-3-3 2-2 1-5-2-4-7-4-7 0-10 5z" fill="url(#edA)" />
        <path d="M1 13q5-5 11-4-6 5-2 12 4 6 15 4-6 6-14 4Q0 25 1 13z" fill="#1b8de0" />
        <path d="M13 12q-4 4 0 9 4 4 12 3l1 0q-2 3-5 3-7 1-11-4-4-7 3-11z" fill="#0d4d9c" />
        <path d="M17 17q2-2 1-5-1-2-4-3 0 0-1 4-1 6 5 8 7 2 11-3-3 2-9 2-4 0-3-3z" fill="#20363f" />
      </svg>
    ),
  },
  {
    name: 'File Explorer',
    open: true,
    icon: (
      <svg viewBox="0 0 28 24" className="w-7 h-6">
        <path d="M0 0h11l2 4h15v19H0z" fill="#d99a1c" /><path d="M0 5h28v18H0z" fill="#fbd35a" />
        <path d="M4 24V13q0-2 2-2h16q2 0 2 2v11h-5v-6H9v6z" fill="#3f9be4" />
      </svg>
    ),
  },
  {
    name: 'Warcraft',
    icon: (
      <svg viewBox="0 0 30 30" className="w-[30px] h-[30px]">
        <circle cx="15" cy="15" r="12.500" fill="#2a1a0e" stroke="#8d7033" strokeWidth="2.500" />
        <circle cx="15" cy="15" r="10" fill="none" stroke="#3c608b" />
        <path d="M5 7h6l2 9 2-8 2 8 2-9h6l-2 2-4 15h-3l-2-7-2 7H9L6 9z" fill="#f4b32b" stroke="#59330a" />
      </svg>
    ),
  },
  {
    name: 'Outlook',
    icon: (
      <svg viewBox="0 0 30 28" className="w-[30px] h-7">
        <path d="M5 10L18 1l12 8v15q0 3-3 3H8q-3 0-3-3z" fill="#1565c0" /><path d="M9 8l9-6 9 6-9 7z" fill="#79d2fa" />
        <path d="M5 25l25-15v14q0 3-3 3H8z" fill="#39aef0" /><rect y="8" width="15" height="15" rx="2" fill="#0f6cbd" />
        <ellipse cx="7.500" cy="15.500" rx="3.500" ry="4" fill="none" stroke="#fff" strokeWidth="2" />
      </svg>
    ),
  },
  {
    name: 'Microsoft Store',
    icon: (
      <svg viewBox="0 0 28 28" className="w-7 h-7">
        <path d="M8 6V1h12v5" fill="none" stroke="#3cb4ee" strokeWidth="2" /><rect y="5" width="28" height="23" rx="3" fill="#f4f4f5" />
        <path d="M9 10h5v5H9z" fill="#ec5127" /><path d="M15 10h5v5h-5z" fill="#80b93a" />
        <path d="M9 16h5v5H9z" fill="#22a2ea" /><path d="M15 16h5v5h-5z" fill="#fbb812" />
      </svg>
    ),
  },
  {
    name: 'WhatsApp',
    icon: (
      <span className="relative">
        <svg viewBox="0 0 30 30" className="w-[30px] h-[30px]">
          <path d="M2 28l2-7a13 13 0 1 1 5 5z" fill="#1d3a3d" stroke="#2fd366" strokeWidth="2.500" />
          <path d="M10 8l3 0 2 4-2 2q1 3 5 5l2-2 4 2q0 4-4 4-11-1-12-11 0-3 2-4z" fill="#2fd366" />
        </svg>
        <span className="absolute left-5 top-[14px] w-[21px] h-[21px] rounded-full bg-[#273a40] border border-[#b5bcbf] text-white text-[13px] leading-[19px] text-center">1</span>
      </span>
    ),
  },
  {
    name: 'Telegram',
    icon: (
      <svg viewBox="0 0 28 28" className="w-7 h-7">
        <circle cx="14" cy="14" r="13.500" fill="#2fa3dc" /><path d="M5 14l17-7-3 15-5-4-3 3-1-5z" fill="#fff" /><path d="M10 16l9-6-7 7-1 4z" fill="#c5dff0" />
      </svg>
    ),
  },
  {
    name: 'Chrome',
    icon: (
      <svg viewBox="0 0 30 30" className="w-[30px] h-[30px]">
        <path d="M15 15L2.500 7.800A14.500 14.500 0 0 1 27.500 7.800H15z" fill="#e33b2e" />
        <path d="M15 15L2.500 7.800A14.500 14.500 0 0 0 15 29.500L21.200 18.600z" fill="#2da94f" />
        <path d="M15 7.800H27.500A14.500 14.500 0 0 1 15 29.500L21.200 18.600z" fill="#fcc934" />
        <circle cx="15" cy="15" r="7.200" fill="#fff" /><circle cx="15" cy="15" r="5.600" fill="#4285f4" />
      </svg>
    ),
  },
  {
    name: 'V-Ray',
    open: true,
    icon: (
      <svg viewBox="0 0 30 30" className="w-[30px] h-[30px]">
        <circle cx="15" cy="15" r="13" fill="#133a52" stroke="#3d94be" strokeWidth="3" />
        <path d="M7 10q5-3 6 1l1 9 5-11q3-3 5 0-4 2-6 6l-5 9h-2L9 12z" fill="#fff" />
      </svg>
    ),
  },
  { name: 'Matrix', open: true, icon: <MatrixLogo className="w-[30px] h-[30px]" /> },
];

const Taskbar = () => (
  <footer className="h-[50px] shrink-0 flex items-stretch bg-gradient-to-r from-[#21393f] via-[#20363f] to-[#1a2547] text-white font-['Open_Sans',sans-serif]">
    <button aria-label="Start" className="w-[60px] flex items-center justify-center">
      <svg viewBox="0 0 20 20" className="w-5 h-5" fill="#fff"><path d="M0 3l8-1v7.500H0zM9 1.800L20 0v9.500H9zM0 10.500h8V18l-8-1zM9 10.500h11V20L9 18.200z" /></svg>
    </button>
    <div className="w-[360px] flex items-center pl-[15px] pr-[3px] bg-[#f3f2f3] border border-[#c5c8ca]">
      <svg viewBox="0 0 20 20" className="w-5 h-5 mr-[14px] shrink-0" fill="none" stroke="#222" strokeWidth="1.500">
        <circle cx="13" cy="7" r="6.200" /><path d="M8.500 11.500L.5 19.500" />
      </svg>
      <input aria-label="Search" placeholder="Type here to search" className="flex-1 min-w-0 bg-transparent text-[18px] placeholder:text-[#3c3c3c] outline-none" />
      <svg viewBox="0 0 92 40" className="w-[92px] h-10 shrink-0">
        <path d="M14 22q0 16 32 16t32-16z" fill="#d4cdb9" />
        <path d="M20 31q10 4 26 4t26-4" fill="none" stroke="#efe9da" strokeWidth="3" />
        <ellipse cx="45" cy="17" rx="35" ry="13" fill="#e4ad4c" />
        <ellipse cx="45" cy="16" rx="30" ry="9" fill="#d5731d" />
        <ellipse cx="45" cy="17" rx="25" ry="7" fill="#e98a2b" />
        <path d="M11 17q2 5 7 5 3 5 9 4 5 4 10 2 6 3 10 0 6 2 10-2 6 1 9-4 6 0 8-5 5-1 6-4" fill="none" stroke="#f2c264" strokeWidth="4" strokeLinecap="round" />
        <ellipse cx="45" cy="16" rx="13" ry="5" fill="#f4e2bd" /><ellipse cx="45" cy="13" rx="11" ry="4" fill="#fbf0d6" />
        <ellipse cx="45" cy="9" rx="7" ry="3" fill="#fff6e0" /><path d="M40 8q6-3 5-8 6 5 4 9z" fill="#fff8e8" />
        <path d="M1 25q11 1 10 11Q0 35 1 25z" fill="#d7691f" /><path d="M10 35l7 4M71 37l8-2" stroke="#7a4a2a" />
        <path d="M75 35q3-7 16-8-2 9-16 8z" fill="#dd6f22" />
      </svg>
    </div>
    <nav className="flex ml-[1px]">
      {apps.map((app) => (
        <button key={app.name} aria-label={app.name} className="relative w-[62px] flex items-center justify-center">
          {app.icon}
          {app.open && <span className="absolute bottom-0 inset-x-[5px] h-[3px] bg-[#76b5ec]" />}
        </button>
      ))}
    </nav>
    <div className="ml-auto flex items-center pr-[11px]">
      <button className="flex items-center gap-[9px] text-[17px] whitespace-nowrap mr-8">
        <svg viewBox="0 0 30 30" className="w-[30px] h-[30px]">
          <path d="M7 17q10 4 14-4 5 3 4 9-4 7-12 5-6-3-6-10z" fill="#f29b2c" />
          <path d="M2 12q-3-5 2-7 2-6 8-3 4 2 3 5 4 2 2 5z" fill="#a9c3f0" />
          <path d="M13 27q-3-5 2-6 2-6 8-4 3 2 3 4 5 2 2 6z" fill="#c4d8f8" />
          <circle cx="23" cy="8" r="7" fill="#c72c27" />
          <text x="23" y="12" fontSize="11" fill="#fff" textAnchor="middle">3</text>
        </svg>
        25°C&nbsp; Partly cloudy
      </button>
      <div className="flex items-center gap-[11px]">
        <svg viewBox="0 0 16 10" className="w-4 h-[10px]" fill="none" stroke="#fff" strokeWidth="1.400"><path d="M1 9l7-8 7 8" /></svg>
        <svg viewBox="0 0 20 20" className="w-5 h-5" fill="none" stroke="#fff" strokeWidth="1.300">
          <path d="M1 3l18-2v17H1zM7 8q3-4 6-1M13 4v4h-4M13 11q-3 5-6 2M7 16v-4h4" /><circle cx="16" cy="16" r="4.500" fill="#f8980f" stroke="none" />
        </svg>
        <svg viewBox="0 0 20 16" className="w-5 h-4" fill="none" stroke="#fff" strokeWidth="1.300">
          <path d="M6 3h12v10H4V8M1 1v3h4V1M3 4v4h2M18 6h1.500v4H18" />
        </svg>
        <svg viewBox="0 0 18 18" className="w-[18px] h-[18px]" fill="none" stroke="#e0e3ea" strokeWidth="1.300">
          <path d="M1 17Q1 3 16 2M5 17Q5 7 16 6M9 17q0-6 7-7M12 17q0-3 4-3" /><circle cx="15.500" cy="16.500" r="1" fill="#fff" />
        </svg>
        <svg viewBox="0 0 20 16" className="w-5 h-4" fill="none" stroke="#fff" strokeWidth="1.200">
          <path d="M1 5h3l4-4v14l-4-4H1z" /><path d="M11 5q2 3 0 6" /><path d="M14 3q4 5 0 10M17 1q5 7 0 14" stroke="#8a93a8" />
        </svg>
        <span className="text-[15px]">ENG</span>
      </div>
      <div className="ml-3 w-[78px] text-center text-[14px] leading-[23px]">
        <p>7:44 PM</p>
        <p>10/15/2025</p>
      </div>
      <button aria-label="Notifications" className="relative ml-4 w-[41px] h-[30px]">
        <svg viewBox="0 0 20 20" className="absolute left-1 top-[3px] w-5 h-5"><path d="M0 0h20v15H9l-4 5v-5H0z" fill="#fff" /><path d="M4 4h12M4 7h12M4 11h8" stroke="#1f2b48" strokeWidth="1.400" /></svg>
        <span className="absolute left-[13px] bottom-[-4px] w-5 h-5 rounded-full bg-[#2a3140] border border-[#7c828d] text-[13px] leading-[18px] font-bold">9</span>
      </button>
    </div>
  </footer>
);

const App: React.FC = () => (
  <div className="relative h-screen flex flex-col overflow-hidden bg-white font-['Liberation_Sans',Arial,sans-serif]">
    <header className="h-[29px] shrink-0 flex items-center pl-[2px]">
      <MatrixLogo className="w-5 h-5" />
      <h1 className="flex-1 pl-[5px] text-[14px] text-[#8c8c8c] font-['Open_Sans',sans-serif]">Matrix 9.0 (64-bit) - Untitled.3dm</h1>
      <div className="flex items-center gap-[46px] pr-[26px]">
        <button aria-label="Minimize"><svg viewBox="0 0 12 12" className="w-3 h-3" stroke="#777"><path d="M0 5.500h12" /></svg></button>
        <button aria-label="Restore"><svg viewBox="0 0 12 12" className="w-3 h-3" fill="none" stroke="#777"><path d="M.5 2.500h9v9h-9zM2.500 2.500v-2h9v9h-2" /></svg></button>
        <button aria-label="Close window"><svg viewBox="0 0 12 12" className="w-3 h-3" stroke="#777"><path d="M0 0l12 12M12 0L0 12" /></svg></button>
      </div>
    </header>
    <nav className="h-[26px] shrink-0 flex items-center gap-4 pl-[5px] pt-[2px] bg-[#e8e8e9] text-[13px] text-[#222]">
      {menuItems.map((item) => (
        <button key={item} className="whitespace-nowrap">{item}</button>
      ))}
    </nav>

    <main className="flex-1 min-h-0 flex bg-[#f4f6fb] border-b border-[#858585]">
      <SidePanel />
      <div className="flex-1 min-w-0 flex flex-col ml-[9px] mt-[9px] mb-2 mr-[8px] bg-[#d6dfde]">
        <CommandArea />
        <ViewTabs />
        <div className="relative flex-1 min-h-0 ml-[1px] bg-black overflow-hidden border-l border-[#777]">
          <Scene />
          <button className="absolute left-0 top-0 h-[23px] w-[129px] flex items-center bg-[#83b38e] pl-[10px] text-[15px] text-[#1d2b20]">
            Looking Down
            <span className="ml-auto h-full w-[14px] border-l border-[#333] flex items-center justify-center">
              <svg viewBox="0 0 10 6" className="w-[10px] h-[6px]"><path d="M0 0h10L5 6z" /></svg>
            </span>
          </button>
          <MetalWeights />
        </div>
        <SnapBar />
        <StatusBar />
      </div>
      <div className="w-[2px] bg-[#858585]" />
    </main>

    <Taskbar />
    <Recorder />

    <div className="absolute right-[80px] bottom-[96px] w-[286px] pointer-events-none font-['Open_Sans',sans-serif]">
      <p className="text-[24px] leading-8 text-[#7d7d7d]">Activate Windows</p>
      <p className="text-[17px] leading-7 whitespace-nowrap text-[#acb3b2]">Go to Settings to activate Windows.</p>
    </div>
  </div>
);

export default App;
